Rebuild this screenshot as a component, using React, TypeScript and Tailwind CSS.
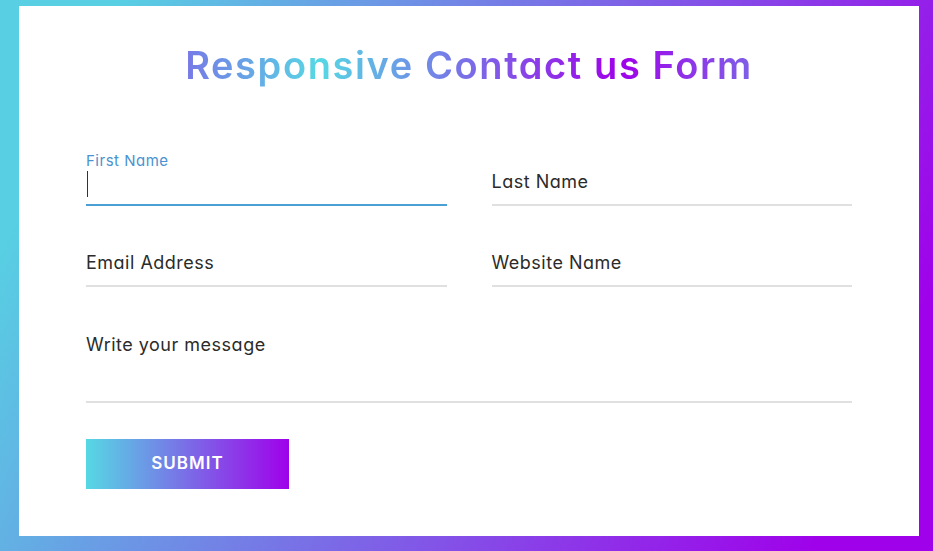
import React from "react";

const font = { fontFamily: "Inter, 'Noto Sans', sans-serif" };

function Field({ label, focused }: { label: string; focused?: boolean }) {
  return (
    <div
      className={
        "relative h-[45px] border-b-2 " +
        (focused ? "border-[#4a9fd4]" : "border-[#e0e0e0]")
      }
    >
      {focused ? (
        <>
          <span className="absolute left-0 top-[-9px] text-[15px] leading-[18px] tracking-[0.5px] text-[#4b92d0] [font-feature-settings:'cv11']">
            {label}
          </span>
          <span className="absolute left-[1px] top-[10px] h-[26px] w-[1px] bg-[#333]" />
        </>
      ) : (
        <span className="absolute left-0 top-[9px] text-[18px] leading-[24px] tracking-[0.5px] text-[#2b2b2b] [font-feature-settings:'cv11']">
          {label}
        </span>
      )}
    </div>
  );
}

export default function App() {
  return (
    <div
      style={font}
      className="flex h-[551px] w-full items-start justify-start bg-[linear-gradient(115deg,#58cfe3_10%,#9f01ea_90%)] pl-[19px] pt-[6px]"
    >
      <div className="h-[530px] w-[900px] bg-white pt-[36px]">
        <h1 className="bg-[linear-gradient(to_left,#56d8e4,#9f01ea,#56d8e4,#9f01ea)] bg-clip-text text-center text-[38px] font-semibold leading-[46px] tracking-[1.6px] text-transparent [font-feature-settings:'cv11']">
          Responsive Contact us Form
        </h1>
        <div className="px-[67px]">
          <div className="mt-[73px] grid grid-cols-2 gap-x-[45px] gap-y-[36px]">
            <Field label="First Name" focused />
            <Field label="Last Name" />
            <Field label="Email Address" />
            <Field label="Website Name" />
          </div>
          <div className="relative mt-[46px] h-[70px] border-b-2 border-[#e0e0e0]">
            <span className="absolute left-0 top-0 text-[18px] leading-[24px] tracking-[0.5px] text-[#2b2b2b] [font-feature-settings:'cv11']">
              Write your message
            </span>
          </div>
          <button className="mt-[36px] flex h-[50px] w-[203px] items-center justify-center bg-[linear-gradient(to_right,#56d8e4,#9f01ea)] text-[17px] font-semibold tracking-[1px] text-white">
            SUBMIT
          </button>
        </div>
      </div>
    </div>
  );
}
